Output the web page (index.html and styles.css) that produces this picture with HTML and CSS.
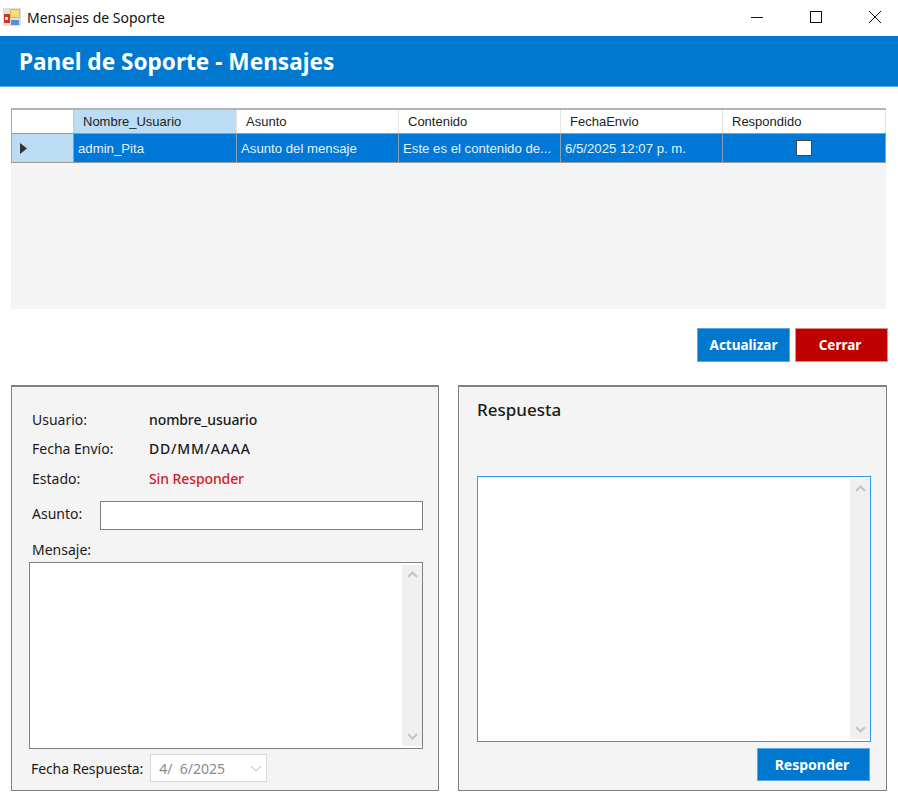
FILE: index.html
```html
<!DOCTYPE html>
<html lang="es">
<head>
  <meta charset="UTF-8">
  <title>Mensajes de Soporte</title>
  <link rel="stylesheet" href="styles.css">
</head>
<body>
  <div class="titlebar">
    <svg class="app-icon" width="18" height="18" viewBox="0 0 18 18">
      <rect x="0" y="0" width="18" height="18" fill="#dedede"/>
      <rect x="1" y="6" width="6" height="9" fill="#c9362c"/>
      <rect x="2" y="9" width="3" height="3" fill="#f4e4e0"/>
      <rect x="7" y="1" width="10" height="9" fill="#e8b93a"/>
      <rect x="8" y="2" width="8" height="7" fill="#f7dc7c"/>
      <rect x="8" y="12" width="8" height="5" fill="#5b8fd6"/>
    </svg>
    <span class="title-text">Mensajes de Soporte</span>
    <div class="win-buttons">
      <svg width="14" height="14" viewBox="0 0 14 14"><path d="M1 7.5H13" stroke="#111" fill="none"/></svg>
      <svg width="14" height="14" viewBox="0 0 14 14"><rect x="1.5" y="1.5" width="11" height="11" stroke="#111" fill="none"/></svg>
      <svg width="14" height="14" viewBox="0 0 14 14"><path d="M1 1L13 13M13 1L1 13" stroke="#111" fill="none"/></svg>
    </div>
  </div>

  <header class="banner">Panel de Soporte - Mensajes</header>

  <div class="grid">
    <div class="grid-head">
      <div class="corner"></div>
      <div class="hcell hcell-active">Nombre_Usuario</div>
      <div class="hcell">Asunto</div>
      <div class="hcell">Contenido</div>
      <div class="hcell">FechaEnvio</div>
      <div class="hcell">Respondido</div>
    </div>
    <div class="grid-row">
      <div class="row-head"><svg width="7" height="11" viewBox="0 0 7 11"><path d="M0 0L7 5.5L0 11Z" fill="#333"/></svg></div>
      <div class="cell">admin_Pita</div>
      <div class="cell">Asunto del mensaje</div>
      <div class="cell">Este es el contenido de...</div>
      <div class="cell">6/5/2025 12:07 p. m.</div>
      <div class="cell cell-check"><span class="checkbox"></span></div>
    </div>
  </div>

  <div class="actions">
    <button class="btn btn-blue">Actualizar</button>
    <button class="btn btn-red">Cerrar</button>
  </div>

  <main class="panels">
    <section class="panel panel-left">
      <div class="info-row row-user"><span class="label">Usuario:</span><span class="value">nombre_usuario</span></div>
      <div class="info-row"><span class="label">Fecha Envío:</span><span class="value value-date">DD/MM/AAAA</span></div>
      <div class="info-row row-state"><span class="label">Estado:</span><span class="value value-red">Sin Responder</span></div>
      <div class="subject-row">
        <span class="label subject-label">Asunto:</span>
        <div class="text-input"></div>
      </div>
      <div class="label message-label">Mensaje:</div>
      <div class="textbox textbox-message">
        <div class="scrollbar">
          <svg width="11" height="7" viewBox="0 0 11 7"><path d="M1 6L5.5 1.5L10 6" stroke="#c4c4c4" stroke-width="2" fill="none"/></svg>
          <svg width="11" height="7" viewBox="0 0 11 7"><path d="M1 1L5.5 5.5L10 1" stroke="#c4c4c4" stroke-width="2" fill="none"/></svg>
        </div>
      </div>
      <div class="reply-date">
        <span class="label">Fecha Respuesta:</span>
        <div class="date-picker">
          <span>4/&nbsp; 6/2025</span>
          <svg width="12" height="7" viewBox="0 0 12 7"><path d="M1 1L6 6L11 1" stroke="#b4b4b4" fill="none"/></svg>
        </div>
      </div>
    </section>

    <section class="panel panel-right">
      <h2 class="reply-title">Respuesta</h2>
      <div class="textbox textbox-reply">
        <div class="scrollbar">
          <svg width="11" height="7" viewBox="0 0 11 7"><path d="M1 6L5.5 1.5L10 6" stroke="#c4c4c4" stroke-width="2" fill="none"/></svg>
          <svg width="11" height="7" viewBox="0 0 11 7"><path d="M1 1L5.5 5.5L10 1" stroke="#c4c4c4" stroke-width="2" fill="none"/></svg>
        </div>
      </div>
      <div class="reply-actions">
        <button class="btn btn-blue btn-reply">Responder</button>
      </div>
    </section>
  </main>
</body>
</html>
```

FILE: styles.css
```css
* {
  margin: 0;
  padding: 0;
  box-sizing: border-box;
}

body {
  width: 898px;
  height: 805px;
  overflow: hidden;
  background: #ffffff;
  color: #1a1a1a;
  font-family: "Noto Sans", sans-serif;
  font-size: 14px;
}

.titlebar {
  height: 36px;
  display: flex;
  align-items: center;
  padding: 0 0 2px 3px;
}

.app-icon {
  margin-right: 6px;
}

.title-text {
  font-size: 14px;
  color: #111;
}

.win-buttons {
  margin-left: auto;
  display: flex;
  gap: 45px;
  padding-right: 16px;
}

.banner {
  height: 51px;
  background: #0078d0;
  border-bottom: 1px solid #5aa9e6;
  color: #ffffff;
  font-size: 22.6px;
  font-weight: 700;
  line-height: 52px;
  padding-left: 19px;
}

.grid {
  margin: 21px 12px 0 11px;
  height: 201px;
  background: #f4f4f4;
  font-family: "Liberation Sans", sans-serif;
  font-size: 13px;
}

.grid-head,
.grid-row {
  display: grid;
  grid-template-columns: 63px 163px 162px 162px 162px 163px;
}

.grid-head {
  height: 25px;
  border-top: 2px solid #b4b4b4;
  background: #ffffff;
}

.corner {
  border-left: 1px solid #a8a8a8;
  border-right: 1px solid #c8c8c8;
}

.hcell {
  padding-left: 9px;
  line-height: 23px;
  border-right: 1px solid #e4e4e4;
  color: #222;
}

.hcell-active {
  background: #bcdcf4;
}

.grid-row {
  height: 30px;
  border-top: 1px solid #9a9a9a;
  border-bottom: 1px solid #9a9a9a;
  background: #0078d7;
}

.row-head {
  background: #bcdcf4;
  border-left: 1px solid #a8a8a8;
  display: flex;
  align-items: center;
  padding-left: 8px;
}

.cell {
  color: #e6f1fb;
  font-size: 13.2px;
  padding-left: 4px;
  line-height: 29px;
  border-left: 1px solid #8a9fb4;
  margin-left: -1px;
  white-space: nowrap;
  overflow: hidden;
}

.cell-check {
  display: flex;
  align-items: center;
  justify-content: center;
  border-right: 1px solid #9a9a9a;
  padding-left: 0;
}

.checkbox {
  width: 16px;
  height: 16px;
  background: #ffffff;
  border: 1px solid #444;
}

.actions {
  margin: 19px 10px 0 0;
  display: flex;
  justify-content: flex-end;
  gap: 5px;
}

.btn {
  width: 93px;
  height: 34px;
  border: 1px solid #5aa9e6;
  color: #ffffff;
  font-family: "Noto Sans", sans-serif;
  font-size: 13.5px;
  font-weight: 700;
}

.btn-blue {
  background: #0078d0;
}

.btn-red {
  background: #c00000;
  border-color: #e08a8a;
  padding-right: 3px;
}

.panels {
  margin: 23px 11px 0 11px;
  display: grid;
  grid-template-columns: 428px 429px;
  gap: 19px;
}

.panel {
  height: 406px;
  background: #f4f4f4;
  border: 1px solid #808080;
  border-top-width: 2px;
}

.panel-left {
  padding: 0 15px 0 17px;
}

.info-row {
  display: flex;
  height: 29px;
  align-items: center;
  padding-left: 3px;
}

.row-user {
  margin-top: 18px;
}

.row-state {
  margin-top: 1px;
}

.info-row .label {
  width: 117px;
}

.value {
  font-weight: 500;
  letter-spacing: -0.1px;
}

.value-date {
  letter-spacing: 0.8px;
}

.value-red {
  color: #d0202e;
}

.subject-row {
  display: flex;
  align-items: center;
  margin-top: 8px;
  padding-left: 3px;
}

.subject-label {
  width: 68px;
  padding-bottom: 5px;
}

.text-input {
  flex: 1;
  height: 29px;
  background: #ffffff;
  border: 1px solid #808080;
}

.message-label {
  margin-top: 10px;
  padding-left: 3px;
  line-height: 20px;
}

.textbox {
  background: #ffffff;
  display: flex;
  justify-content: flex-end;
}

.textbox-message {
  margin-top: 2px;
  height: 187px;
  border: 1px solid #808080;
}

.scrollbar {
  width: 20px;
  margin: 2px 0 2px 0;
  background: #f0f0f0;
  display: flex;
  flex-direction: column;
  justify-content: space-between;
  align-items: center;
  padding: 6px 0;
}

.reply-date {
  display: flex;
  align-items: center;
  margin-top: 5px;
  padding-left: 2px;
  gap: 7px;
}

.reply-date .label {
  letter-spacing: -0.1px;
}

.date-picker {
  width: 117px;
  height: 28px;
  background: #ffffff;
  border: 1px solid #d8d8d8;
  color: #8a8a8a;
  display: flex;
  align-items: center;
  justify-content: space-between;
  padding: 0 4px 0 8px;
}

.panel-right {
  padding: 0 15px 0 18px;
}

.reply-title {
  font-size: 17px;
  font-weight: 500;
  line-height: 24px;
  margin-top: 11px;
}

.textbox-reply {
  margin-top: 54px;
  height: 266px;
  border: 1px solid #2f9be8;
}

.reply-actions {
  margin-top: 6px;
  display: flex;
  justify-content: flex-end;
  padding-right: 1px;
}

.btn-reply {
  width: 113px;
  height: 33px;
  font-size: 14px;
  padding-right: 3px;
}
```
